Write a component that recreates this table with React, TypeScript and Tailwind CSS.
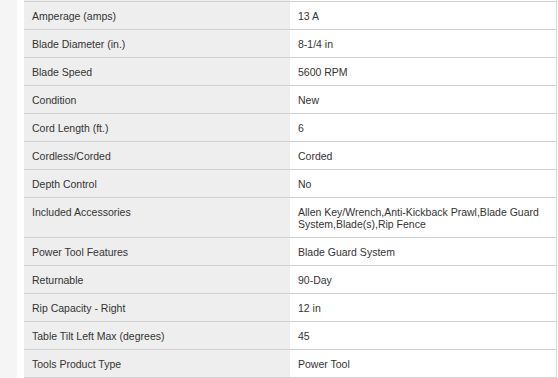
import React from "react";

const rows: [string, string][] = [
  ["Amperage (amps)", "13 A"],
  ["Blade Diameter (in.)", "8-1/4 in"],
  ["Blade Speed", "5600 RPM"],
  ["Condition", "New"],
  ["Cord Length (ft.)", "6"],
  ["Cordless/Corded", "Corded"],
  ["Depth Control", "No"],
  ["Included Accessories", "Allen Key/Wrench,Anti-Kickback Prawl,Blade Guard System,Blade(s),Rip Fence"],
  ["Power Tool Features", "Blade Guard System"],
  ["Returnable", "90-Day"],
  ["Rip Capacity - Right", "12 in"],
  ["Table Tilt Left Max (degrees)", "45"],
  ["Tools Product Type", "Power Tool"],
];

export default function App() {
  return (
    <div
      className="flex h-[378px] w-[558px] bg-white overflow-hidden text-[#333333]"
      style={{ fontFamily: '"Liberation Sans", Arial, sans-serif' }}
    >
      <div className="w-[17px] h-full bg-[#f5f5f5]" />
      <div className="w-[7px] h-full" />
      <div className="w-[533px] h-full border-r border-[#d6d6d6] flex flex-col">
        <div className="flex h-[1px]">
          <div className="w-[266px] bg-[#eeeeee]" />
          <div className="flex-1" />
        </div>
        {rows.map(([k, v], i) => (
          <div
            key={k}
            className={`flex border-t border-[#d0d0d0] ${i === rows.length - 1 ? "border-b" : ""}`}
          >
            <div className="w-[266px] shrink-0 bg-[#eeeeee] pl-[8px] pr-[8px] pt-[8px] pb-[7px] text-[10.5px] leading-[12px]">
              {k}
            </div>
            <div className="flex-1 pl-[8px] pr-[8px] pt-[8px] pb-[7px] text-[10.5px] leading-[12px]">
              {v}
            </div>
          </div>
        ))}
      </div>
    </div>
  );
}
